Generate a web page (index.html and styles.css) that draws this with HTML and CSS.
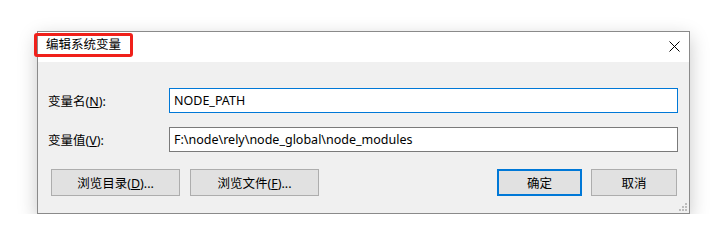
FILE: index.html
```html
<!DOCTYPE html>
<html>
<head>
<meta charset="utf-8">
<title>编辑系统变量</title>
<link rel="stylesheet" href="styles.css">
</head>
<body>

<div class="dialog">
  <div class="titlebar">
    <span class="title">编辑系统变量</span>
    <span class="close">
      <svg width="11" height="11" viewBox="0 0 11 11"><path d="M0.5 0.5L10.5 10.5M10.5 0.5L0.5 10.5" stroke="#000" stroke-width="1"/></svg>
    </span>
  </div>

  <div class="content">
    <div class="row">
      <label class="lbl">变量名(<u>N</u>):</label>
      <div class="field focus">NODE_PATH</div>
    </div>
    <div class="row">
      <label class="lbl">变量值(<u>V</u>):</label>
      <div class="field">F:\node\rely\node_global\node_modules</div>
    </div>

    <div class="buttons">
      <button class="btn wide">浏览目录(<u>D</u>)...</button>
      <button class="btn wide">浏览文件(<u>F</u>)...</button>
      <span class="spacer"></span>
      <button class="btn ok">确定</button>
      <button class="btn cancel">取消</button>
    </div>
  </div>

  <svg class="grip" width="8" height="8" viewBox="0 0 8 8">
    <rect x="6" y="0" width="2" height="2" fill="#bcbcbc"/>
    <rect x="3" y="3" width="2" height="2" fill="#bcbcbc"/>
    <rect x="6" y="3" width="2" height="2" fill="#bcbcbc"/>
    <rect x="0" y="6" width="2" height="2" fill="#bcbcbc"/>
    <rect x="3" y="6" width="2" height="2" fill="#bcbcbc"/>
    <rect x="6" y="6" width="2" height="2" fill="#bcbcbc"/>
  </svg>
</div>

</body>
</html>
```

FILE: styles.css
```css
body{
  margin:0;
  background:#ffffff;
  font-family:"Noto Sans","Noto Sans CJK SC",sans-serif;
  font-size:12.5px;
  color:#000000;
}

.dialog{
  position:relative;
  box-sizing:border-box;
  width:653px;
  height:183px;
  margin:31px 0 0 37px;
  border:1px solid #8a8a8a;
  background:#f0f0f0;
  box-shadow:0 6px 18px rgba(0,0,0,0.22);
}

.titlebar{
  display:flex;
  align-items:flex-start;
  justify-content:space-between;
  height:30px;
  background:#ffffff;
}

.title{
  box-sizing:border-box;
  height:24px;
  margin:1px 0 0 -4px;
  padding:0 9px;
  line-height:18px;
  border:3px solid #f0201a;
  border-radius:3px;
}

.close{
  margin:9px 9px 0 0;
  line-height:0;
}

.content{
  padding:26px 11px 0 10px;
}

.row{
  display:flex;
  align-items:center;
  margin-bottom:14px;
}

.lbl{
  width:121px;
}

.field{
  box-sizing:border-box;
  flex:1;
  height:25px;
  line-height:23px;
  padding:0 4px;
  background:#ffffff;
  border:1px solid #7a7a7a;
}

.field.focus{
  border-color:#0078d7;
}

.buttons{
  display:flex;
  margin:17px 1px 0 3px;
}

.btn{
  box-sizing:border-box;
  height:27px;
  padding:0;
  font-family:inherit;
  font-size:12.5px;
  color:#000000;
  background:#e1e1e1;
  border:1px solid #adadad;
}

.wide{
  width:129px;
  margin-right:10px;
}

.spacer{
  flex:1;
}

.ok{
  width:85px;
  margin-right:9px;
  border:2px solid #0078d7;
}

.cancel{
  width:86px;
}

.grip{
  position:absolute;
  right:2px;
  bottom:2px;
}
```
